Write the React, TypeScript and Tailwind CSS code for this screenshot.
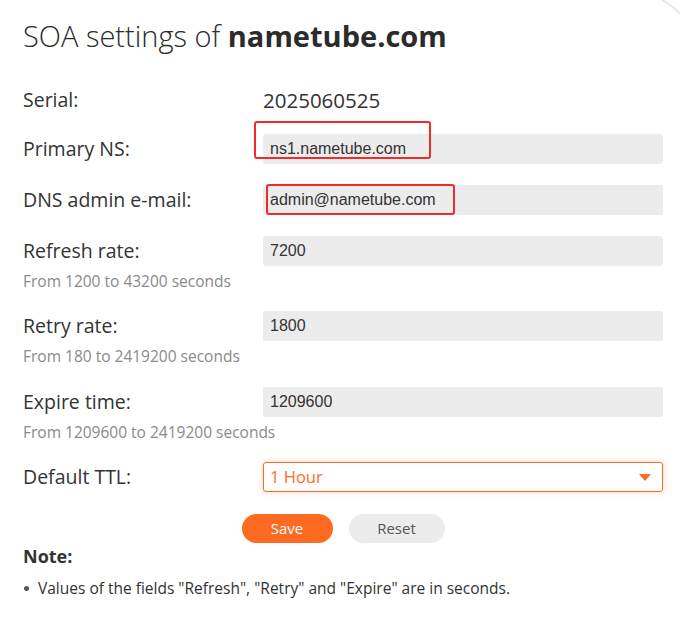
import React from "react";

const labelCls = "w-[240px] shrink-0 text-[19.5px] text-[#333333] leading-[30px]";
const inputCls =
  "relative w-[400px] h-[30px] rounded-[3px] bg-[#ececec] pl-[7px] flex items-center text-[16px] text-[#333333] font-['Liberation_Sans',Arial,sans-serif]";
const hintCls = "mt-[5px] text-[15.5px] leading-5 text-[#8a8a8a]";

function Row({ label, value, children }: { label: string; value: string; children?: React.ReactNode }) {
  return (
    <div className="flex items-center">
      <div className={labelCls}>{label}</div>
      <div className={inputCls}>
        <span>{value}</span>
        {children}
      </div>
    </div>
  );
}

export default function App() {
  return (
    <div className="relative w-[684px] h-[635px] bg-white overflow-hidden font-['Open_Sans','Noto_Sans',sans-serif]">
      <svg className="absolute right-0 top-0" width="30" height="14" viewBox="0 0 30 14">
        <path d="M8 0 C 14 3, 20 7, 26 14" fill="none" stroke="#e2e2e2" strokeWidth="1.5" />
      </svg>
      <div className="pl-[23px] pr-[21px] pt-[18px] flex flex-col">
        <h1 className="text-[29px] leading-9 text-[#2b2b2b] font-light">
          SOA settings of <span className="font-bold">nametube.com</span>
        </h1>

        <div className="mt-[31px] flex items-center">
          <div className={labelCls}>Serial:</div>
          <div className="text-[20.5px] leading-[30px] text-[#333333]">2025060525</div>
        </div>

        <div className="mt-[19px]">
          <Row label="Primary NS:" value="ns1.nametube.com">
            <div className="absolute left-[-9px] top-[-13px] w-[177px] h-[38px] border-2 border-[#f22a2a] rounded-[3px]" />
          </Row>
        </div>

        <div className="mt-[21px]">
          <Row label="DNS admin e-mail:" value="admin@nametube.com">
            <div className="absolute left-[3px] top-[-1px] w-[189px] h-[31px] border-2 border-[#f22a2a] rounded-[3px]" />
          </Row>
        </div>

        <div className="mt-[21px]">
          <Row label="Refresh rate:" value="7200" />
          <div className={hintCls}>From 1200 to 43200 seconds</div>
        </div>

        <div className="mt-[20px]">
          <Row label="Retry rate:" value="1800" />
          <div className={hintCls}>From 180 to 2419200 seconds</div>
        </div>

        <div className="mt-[21px]">
          <Row label="Expire time:" value="1209600" />
          <div className={hintCls}>From 1209600 to 2419200 seconds</div>
        </div>

        <div className="mt-[20px] flex items-center">
          <div className={labelCls}>Default TTL:</div>
          <div className="w-[400px] h-[30px] rounded-[3px] border border-[#ff6a25] shadow-[0_0_6px_rgba(255,106,37,0.25)] pl-[6px] pr-[11px] flex items-center justify-between">
            <span className="text-[16.5px] text-[#ff6a25]">1 Hour</span>
            <svg width="12" height="7" viewBox="0 0 12 7">
              <path d="M0 0 H12 L6 7 Z" fill="#ff6a25" />
            </svg>
          </div>
        </div>

        <div className="mt-[22px] flex justify-center gap-[16px]">
          <button className="w-[91px] h-[29px] rounded-full bg-[#ff6a22] text-white text-[15px]">Save</button>
          <button className="w-[96px] h-[29px] rounded-full bg-[#ececec] text-[#555555] text-[15px]">Reset</button>
        </div>

        <div className="mt-[1px] text-[18px] leading-6 font-bold text-[#333333]">Note:</div>

        <div className="mt-[10px] flex items-center text-[15.5px] leading-5 text-[#333333]">
          <span className="w-[5px] h-[5px] rounded-full bg-[#555555] ml-[1px] mr-[9px]" />
          <span>Values of the fields "Refresh", "Retry" and "Expire" are in seconds.</span>
        </div>
      </div>
    </div>
  );
}
